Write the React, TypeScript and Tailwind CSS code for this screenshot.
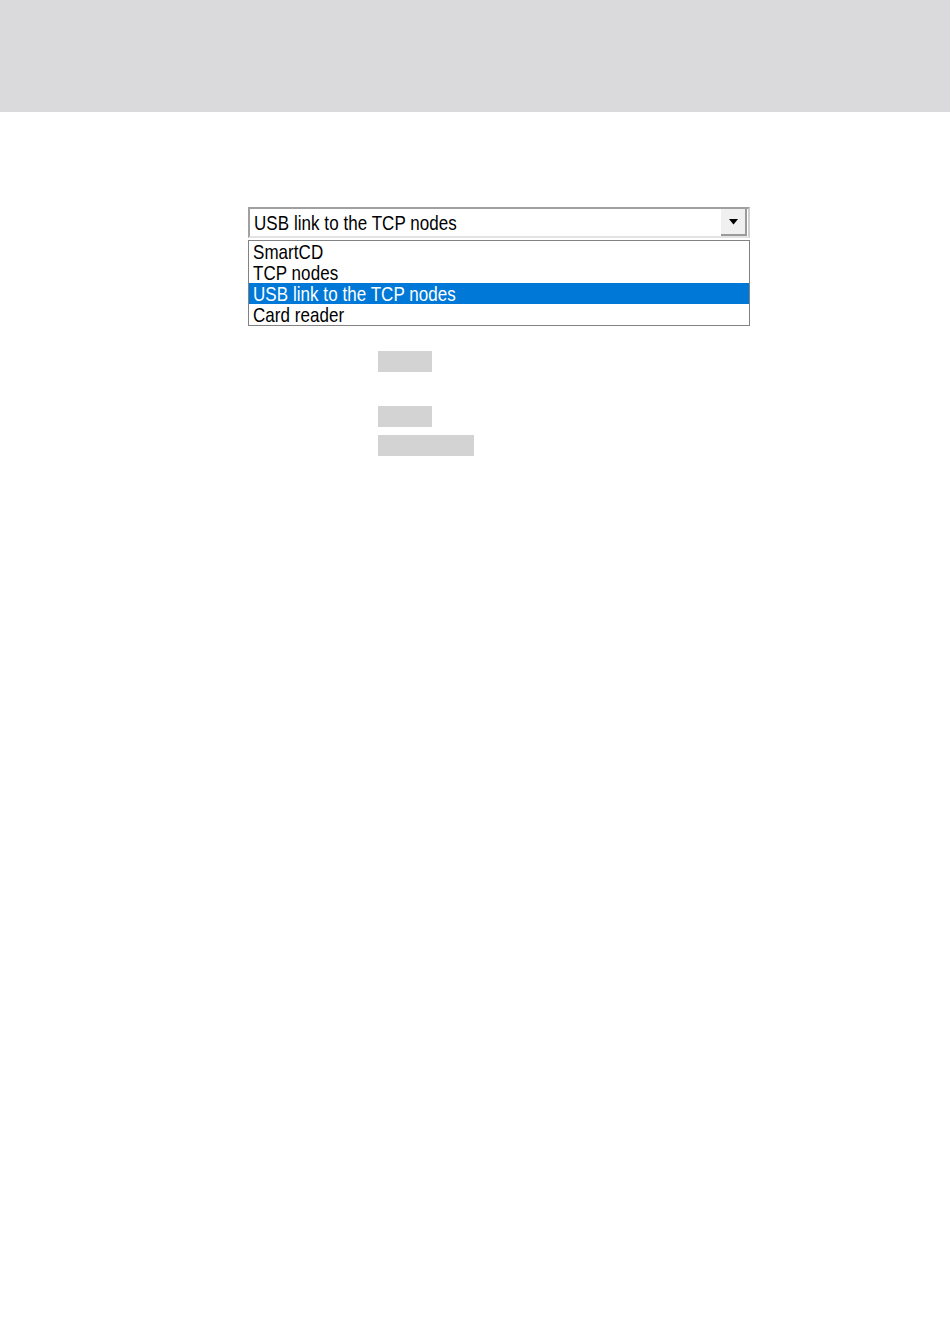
import React from "react";

const font = { fontFamily: '"Liberation Sans", Arial, sans-serif' };

export default function App() {
  const items = ["SmartCD", "TCP nodes", "USB link to the TCP nodes", "Card reader"];
  return (
    <div className="w-[950px] h-[1344px] bg-white" style={font}>
      <div className="h-[112px] bg-[#dadadd]" />
      <div className="pl-[248px] pt-[95px]">
        <div className="w-[502px] h-[31px] flex items-stretch border-2 border-t-[#a0a0a0] border-l-[#a0a0a0] border-r-[#d0d0d0] border-b-[#e3e3e3] bg-white">
          <div className="flex-1 flex items-center pl-[4px] pt-[2px] text-[17px] leading-none text-black">
            <span className="inline-block scale-y-[1.15] tracking-[0.05px]">USB link to the TCP nodes</span>
          </div>
          <div className="w-[26px] flex items-center justify-center bg-[#f0f0f0] border-r-2 border-b-2 border-r-[#9a9a9a] border-b-[#9a9a9a] mr-[1px]">
            <svg width="9" height="6" viewBox="0 0 9 6"><path d="M0 0H9L4.5 5.5Z" fill="#000" /></svg>
          </div>
        </div>
        <div className="mt-[2px] w-[502px] border border-[#828282] bg-white">
          {items.map((t, i) => (
            <div
              key={t}
              className={
                i === 2
                  ? "h-[21px] flex items-center pl-[4px] pt-[2px] text-[17px] leading-none bg-[#0078d7] text-white"
                  : "h-[21px] flex items-center pl-[4px] pt-[2px] text-[17px] leading-none text-black"
              }
            >
              <span className="inline-block scale-y-[1.15] tracking-[0.05px]">{t}</span>
            </div>
          ))}
        </div>
        <div className="pl-[130px] pt-[25px] flex flex-col">
          <div className="w-[54px] h-[21px] bg-[#d3d3d3]" />
          <div className="w-[54px] h-[21px] bg-[#d3d3d3] mt-[34px]" />
          <div className="w-[96px] h-[21px] bg-[#d3d3d3] mt-[8px]" />
        </div>
      </div>
    </div>
  );
}
